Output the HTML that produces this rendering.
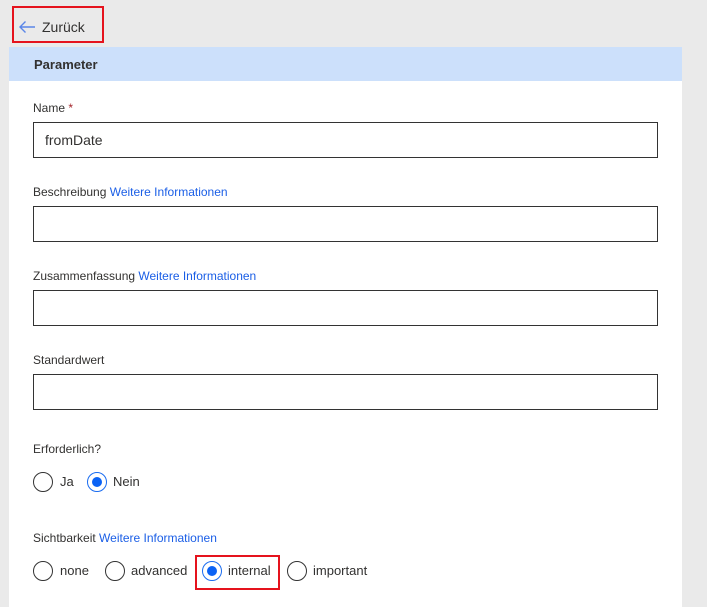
<!DOCTYPE html>
<html><head><style>
body{margin:0;width:707px;height:603px;background:#eaeaea;font-family:"Segoe UI","Liberation Sans",sans-serif;position:relative;overflow:hidden;color:#323130}
.a{position:absolute}
.panel{left:9px;top:47px;width:673px;height:560px;background:#fff}
.hdr{left:9px;top:47px;width:673px;height:34px;background:#cce0fb;}
.hdr span{position:absolute;left:25px;top:10px;font-size:13px;font-weight:bold;color:#323130}
.lbl{font-size:12px;left:33px}
.lbl b{font-weight:normal;color:#1a5ee6}
.inp{left:33px;width:623px;height:34px;border:1px solid #333;background:#fff}
.r{width:18px;height:18px;border:1px solid #333;border-radius:50%;background:#fff}
.r.on{border-color:#1a6cf0}
.r.on:after{content:"";position:absolute;left:4px;top:4px;width:10px;height:10px;border-radius:50%;background:#0a62f5}
.t{font-size:13px}
.red{border:2px solid #e5131d}
</style></head><body>
<div class="a red" style="left:12px;top:6px;width:88px;height:33px"></div>
<svg class="a" style="left:18px;top:20px" width="18" height="14" viewBox="0 0 18 14"><path d="M17 7H2M7.5 1.5L2 7l5.5 5.5" fill="none" stroke="#5a86e8" stroke-width="1.4"/></svg>
<div class="a" style="left:42px;top:19px;font-size:14px">Zurück</div>
<div class="a panel"></div>
<div class="a hdr"><span>Parameter</span></div>
<div class="a lbl" style="top:101px">Name <span style="color:#a4262c">*</span></div>
<div class="a inp" style="top:122px"><span style="position:absolute;left:11px;top:9px;font-size:14px">fromDate</span></div>
<div class="a lbl" style="top:185px">Beschreibung <b>Weitere Informationen</b></div>
<div class="a inp" style="top:206px"></div>
<div class="a lbl" style="top:269px">Zusammenfassung <b>Weitere Informationen</b></div>
<div class="a inp" style="top:290px"></div>
<div class="a lbl" style="top:353px">Standardwert</div>
<div class="a inp" style="top:374px"></div>
<div class="a lbl" style="top:442px">Erforderlich?</div>
<div class="a r" style="left:33px;top:472px"></div><div class="a t" style="left:60px;top:474px">Ja</div>
<div class="a r on" style="left:87px;top:472px"></div><div class="a t" style="left:113px;top:474px">Nein</div>
<div class="a lbl" style="top:531px">Sichtbarkeit <b>Weitere Informationen</b></div>
<div class="a r" style="left:33px;top:561px"></div><div class="a t" style="left:60px;top:563px">none</div>
<div class="a r" style="left:105px;top:561px"></div><div class="a t" style="left:131px;top:563px">advanced</div>
<div class="a red" style="left:195px;top:555px;width:81px;height:31px"></div>
<div class="a r on" style="left:202px;top:561px"></div><div class="a t" style="left:228px;top:563px">internal</div>
<div class="a r" style="left:287px;top:561px"></div><div class="a t" style="left:313px;top:563px">important</div>
</body></html>
